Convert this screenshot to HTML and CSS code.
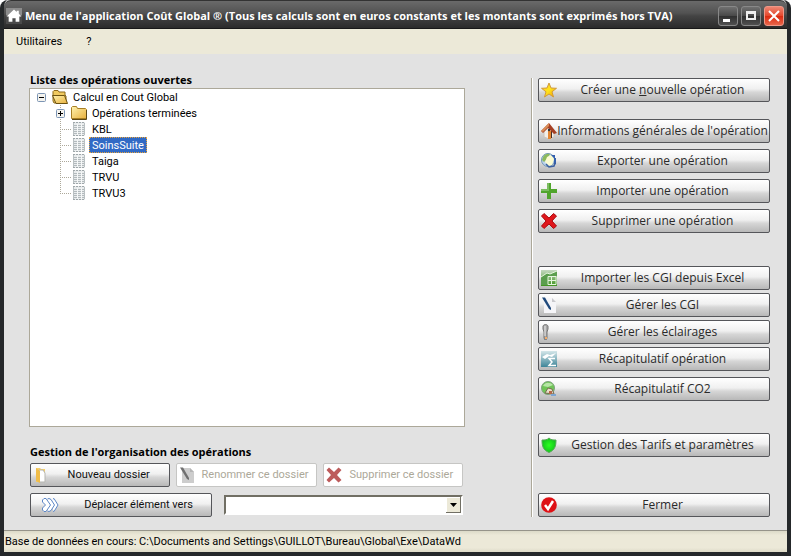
FILE: index.html
```
<!DOCTYPE html>
<html lang="fr">
<head>
    <meta charset="UTF-8">
    <meta name="viewport" content="width=device-width, initial-scale=1.0">
    <title>Menu de l'application Coût Global</title>
    <link rel="stylesheet" href="styles.css">
</head>
<body>
    <!-- Icônes et dégradés partagés -->
    <svg class="defs" width="0" height="0" aria-hidden="true">
        <defs>
            <linearGradient id="gFolder" x1="0" y1="0" x2="1" y2="1">
                <stop offset="0" stop-color="#fff3b0"/>
                <stop offset="1" stop-color="#e8b03c"/>
            </linearGradient>
            <linearGradient id="gStar" x1="0" y1="0" x2="1" y2="1">
                <stop offset="0" stop-color="#ffc81c"/>
                <stop offset=".5" stop-color="#ffe41c"/>
                <stop offset="1" stop-color="#f59a00"/>
            </linearGradient>
            <linearGradient id="gGreen" x1="0" y1="0" x2="0" y2="1">
                <stop offset="0" stop-color="#c4d8c0"/>
                <stop offset="1" stop-color="#3f9420"/>
            </linearGradient>
            <linearGradient id="gTeal" x1="0" y1="0" x2="0" y2="1">
                <stop offset="0" stop-color="#d4e6e9"/>
                <stop offset="1" stop-color="#3e8598"/>
            </linearGradient>
            <radialGradient id="gShield">
                <stop offset="0" stop-color="#2cff20"/>
                <stop offset="1" stop-color="#14c41c"/>
            </radialGradient>
        </defs>
        <symbol id="doc" viewBox="0 0 16 16">
            <path d="M2 1h12v14H2z" fill="#e9eced"/>
            <path d="M2 1.500h12M2 14.500h12" stroke="#9ea6a9" stroke-dasharray="2 1"/>
            <path d="M3 4.500h10M3 6.500h10M3 8.500h10M3 10.500h10M3 12.500h10" stroke="#b3babd"/>
            <path d="M2.500 2v12M13.500 2v12" stroke="#b9c0c2"/>
            <path d="M6.500 3v11M10.500 3v11" stroke="#f6f8f8"/>
        </symbol>
        <symbol id="plus" viewBox="0 0 9 9">
            <rect x=".5" y=".5" width="8" height="8" rx="1" fill="#f4f3ee" stroke="#7c95b4"/>
            <path d="M2 4.500h5M4.500 2v5" stroke="#000"/>
        </symbol>
        <symbol id="minus" viewBox="0 0 9 9">
            <rect x=".5" y=".5" width="8" height="8" rx="1" fill="#f4f3ee" stroke="#7c95b4"/>
            <path d="M2 4.500h5" stroke="#000"/>
        </symbol>
        <symbol id="cross" viewBox="0 0 16 16">
            <path d="M3 .5 8 5l4.500-4.500L15.500 3 11 8l4.500 5-3 2.500L8 11l-5 4.500L.5 13 5 8 .5 3z"/>
        </symbol>
        <symbol id="pen" viewBox="0 0 16 16">
            <path class="sheet" d="M3 1h8l4 4v11H3z"/>
            <path class="fold" d="M11 1v4h4z"/>
            <path class="ink" d="M1 .5h3L10 11v2L8 12z"/>
        </symbol>
    </svg>

    <div class="window">
        <header class="titlebar">
            <svg class="icon" viewBox="0 0 15 15">
                <path d="M0 0h15v15H0z" fill="#4a4a4a"/>
                <path d="M0 0h15v7H0z" fill="#8c8c8c"/>
                <path d="M7.500 1.500 0.500 8h2v5h3.500V9.500h3V13h3.500V8h2L12 5.500V2.500h-2v1.300z" fill="#fff"/>
            </svg>
            <h1>Menu de l'application Coût Global ® (Tous les calculs sont en euros constants et les montants sont exprimés hors TVA)</h1>
            <div class="controls">
                <button type="button" aria-label="Réduire"><svg viewBox="0 0 18 18"><path d="M4 12h7v3H4z" fill="#fff"/></svg></button>
                <button type="button" aria-label="Agrandir"><svg viewBox="0 0 18 18"><path d="M4 4h10v9H4zM6 7v4h6V7z" fill="#eee" fill-rule="evenodd"/></svg></button>
                <button type="button" class="close" aria-label="Fermer la fenêtre"><svg viewBox="0 0 18 18"><path d="m4 4 10 10M14 4 4 14" stroke="#fff" stroke-width="2"/></svg></button>
            </div>
        </header>

        <nav class="menu">
            <a href="#">Utilitaires</a>
            <a href="#">?</a>
        </nav>

        <main>
            <section class="left">
                <h2>Liste des opérations ouvertes</h2>
                <div class="tree">
                    <div class="row"><svg class="toggle"><use href="#minus"/></svg>
                        <svg class="icon" viewBox="0 0 16 16"><path d="M1 4V2.500L2 1.500h4l1 1.500h6v3l1 1v7H2L1 12z" fill="#f0ca60" stroke="#8c6a1c"/><path d="M.5 6.500h12l3 8H4z" fill="url(#gFolder)" stroke="#6b5210"/></svg>
                        <span>Calcul en Cout Global</span></div>
                    <ul>
                        <li class="row branch"><svg class="toggle"><use href="#plus"/></svg>
                            <svg class="icon" viewBox="0 0 16 16"><path d="M.5 13.500v-11l1-1h4l1 2h8l1 1v9z" fill="url(#gFolder)" stroke="#a87f24"/><path d="M1 14.500h14.500V5" fill="none" stroke="#5c4716"/></svg>
                            <span>Opérations terminées</span></li>
                        <li class="row"><svg class="icon"><use href="#doc"/></svg><span>KBL</span></li>
                        <li class="row"><svg class="icon"><use href="#doc"/></svg><span class="selected">SoinsSuite</span></li>
                        <li class="row"><svg class="icon"><use href="#doc"/></svg><span>Taiga</span></li>
                        <li class="row"><svg class="icon"><use href="#doc"/></svg><span>TRVU</span></li>
                        <li class="row"><svg class="icon"><use href="#doc"/></svg><span>TRVU3</span></li>
                    </ul>
                </div>

                <h2>Gestion de l'organisation des opérations</h2>
                <div class="actions">
                    <button type="button" class="btn"><svg class="icon" viewBox="0 0 16 16"><path d="M3 1h4l1 1h4v13H3z" fill="#f5cf6c"/><path d="M6 3h4l2 3v9H6z" fill="#fff" stroke="#b5b5b0"/><path d="m3 1 4 3v12l-4-2z" fill="#f0bd4a"/></svg><span>Nouveau dossier</span></button>
                    <button type="button" class="btn" disabled><svg class="icon pen"><use href="#pen"/></svg><span>Renommer ce dossier</span></button>
                    <button type="button" class="btn" disabled><svg class="icon" fill="#bd5b5b"><use href="#cross"/></svg><span>Supprimer ce dossier</span></button>
                </div>
                <div class="actions move">
                    <button type="button" class="btn"><svg class="icon wide" viewBox="0 0 18 16"><path d="m12 2 1-.5 4 6.500-4 6.500-1-.5M6.500 2 8 1.500l2 1L13.500 8 10 13.500l-2 1L6.500 14" fill="#fff" stroke="#5c86c6"/><path d="M1.500 3 3 1.500h2L9.500 8 5 14.500H3L1.500 13v-2L4.500 8l-3-3z" fill="#fff" stroke="#5c86c6"/></svg><span>Déplacer élément vers</span></button>
                    <div class="combo">
                        <select aria-label="Dossier de destination"><option></option></select>
                        <svg class="arrow" viewBox="0 0 15 16"><path d="M0 0h15v16H0z" fill="#716f64"/><path d="M0 0h14v15H0z" fill="#fff"/><path d="M1 1h13v14H1z" fill="#ece9d8"/><path d="M4 6h7L7.500 10z"/></svg>
                    </div>
                </div>
            </section>

            <aside class="side">
                <div class="group">
                    <button type="button" class="btn"><svg class="icon" viewBox="0 0 16 16"><path d="m8 1 2 5 5.500.3L11 9.800l1.500 5.200L8 12l-4.500 3L5 9.800.5 6.300 6 6z" fill="url(#gStar)" stroke="#d09a3c"/></svg><span>Créer une <u>n</u>ouvelle opération</span></button>
                </div>
                <div class="group operations">
                    <button type="button" class="btn"><svg class="icon" viewBox="0 0 16 16"><path d="M3 8v6l5 2 5-2V8L8 4z" fill="#f2eee9" stroke="#ccc2b8"/><path d="M7 8h3v8H7z" fill="#e48632"/><path d="M10 8h1v7h-1z" fill="#463028"/><path d="M8 0 0 8l2 2 5-5 6 6 3-1z" fill="#a64024"/><path d="M8 0 0 8l2 1 6-6z" fill="#d98b55"/><circle cx="8" cy="7" r="1.200" fill="#333"/></svg><span>Informations générales de l'opération</span></button>
                    <button type="button" class="btn"><svg class="icon" viewBox="0 0 16 16"><circle cx="7" cy="7" r="6.500" fill="#bcd4ee" stroke="#6f96b5"/><path d="M2 4c1-3 5-4 7-3L6 6 3 9 1 7z" fill="#8dba5d"/><path d="m6 4 4-2 3 4-2 6-4 1-3-4z" fill="#fbfbd0"/><path d="M10 2h4v3h1v6l-2 1V5z" fill="#3560ad"/><path d="m5 11 3 3 5-1 1-3" fill="none" stroke="#3b60a0" stroke-width="1.500"/></svg><span>Exporter une opération</span></button>
                    <button type="button" class="btn"><svg class="icon" viewBox="0 0 16 16"><path d="M6 0h4v6h6v4h-6v6H6v-6H0V6h6z" fill="#50a52c"/><path d="M6 0h2v8H0V6h6z" fill="#7cbc61"/></svg><span>Importer une opération</span></button>
                    <button type="button" class="btn"><svg class="icon" fill="#e0161b" stroke="#a90d12"><use href="#cross"/></svg><span>Supprimer une opération</span></button>
                </div>
                <div class="group tight">
                    <button type="button" class="btn"><svg class="icon" viewBox="0 0 16 16"><path d="M0 0h16v16H0z" fill="url(#gGreen)"/><path d="M0 7 6 3l3 1 7-3v5H7v9H0z" fill="#5b9e4e"/><path d="M0 7 6 3l3 1 7-3M7 6.500h8v8H7zM7 10.500h8M10.500 6v9" fill="none" stroke="#e6f5df"/></svg><span>Importer les CGI depuis Excel</span></button>
                    <button type="button" class="btn"><svg class="icon pen"><use href="#pen"/></svg><span>Gérer les CGI</span></button>
                    <button type="button" class="btn"><svg class="icon" viewBox="0 0 16 16"><path d="M2 2c1-2 4-2 5 0v3L6 8v6l-1 2H4l-1-2V8L2 5z" fill="#a7a7a7" stroke="#777"/><path d="M4 2v10" stroke="#eee"/><path d="M4 13h2v2H4z" fill="#f2ac6a"/></svg><span>Gérer les éclairages</span></button>
                    <button type="button" class="btn"><svg class="icon" viewBox="0 0 16 16"><path d="M0 0h16v16H0z" fill="url(#gTeal)"/><path d="m1 6 5-3 3 1 6-2-4 4-3-1-4 3z" fill="#fff"/><path d="M14 7.500H8l3 3.500-3 3.500h7" fill="none" stroke="#fff" stroke-width="1.500"/></svg><span>Récapitulatif opération</span></button>
                </div>
                <div class="group co2">
                    <button type="button" class="btn"><svg class="icon" viewBox="0 0 16 16"><circle cx="7" cy="7" r="6.500" fill="#6fc456" stroke="#80a080"/><path d="M2 5c2-4 7-4 10-1L7 6z" fill="#b7e6a6"/><path d="m4 12 3-5 4 1 2 5z" fill="#e8e0ca" stroke="#766c50"/><path d="M8 10h3v3H8z" fill="#b56848"/><path d="M10 13h5v2h-5z" fill="#7fa6d3"/></svg><span>Récapitulatif CO2</span></button>
                </div>
                <div class="group tarifs">
                    <button type="button" class="btn"><svg class="icon" viewBox="0 0 16 16"><path d="M8 1c2 2 4 2 7 2 0 6-1 10-7 12.500C2 13 1 9 1 3c3 0 5 0 7-2z" fill="url(#gShield)" stroke="#58a858"/></svg><span>Gestion des Tarifs et paramètres</span></button>
                </div>
                <div class="group fermer">
                    <button type="button" class="btn"><svg class="icon" viewBox="0 0 16 16"><circle cx="8" cy="8" r="7.800" fill="#de1015"/><path d="m4 8 3 4 5-8" fill="none" stroke="#fff" stroke-width="2.500"/></svg><span>Fermer</span></button>
                </div>
            </aside>
        </main>

        <footer>Base de données en cours: C:\Documents and Settings\GUILLOT\Bureau\Global\Exe\DataWd</footer>
    </div>
</body>
</html>
```
FILE: styles.css
```
* {
    box-sizing: border-box;
}

body {
    margin: 0;
    background-color: #fff;
    color: #000;
    font-family: Roboto, "Liberation Sans", sans-serif;
    font-size: 11px;
    line-height: 16px;
}

h1, h2 {
    margin: 0;
    font-family: "Open Sans", sans-serif;
    font-size: 11px;
    font-weight: bold;
    line-height: 16px;
    white-space: nowrap;
}

.defs {
    position: absolute;
}

.icon {
    flex: none;
    width: 16px;
    height: 16px;
}

.window {
    display: flex;
    flex-direction: column;
    min-height: 100vh;
    border: 4px solid #25282a;
    border-top: 0;
    border-radius: 8px 8px 0 0;
    background-color: #e2e2e2;
}

.titlebar {
    display: flex;
    align-items: center;
    gap: 3px;
    height: 29px;
    padding: 2px 3px 0 2px;
    border-top: 1px solid #333;
    border-bottom: 1px solid #181818;
    border-radius: 7px 7px 0 0;
    background: linear-gradient(#6a6a6a, #525252 45%, #444 55%, #2b2b2b);
}

.titlebar h1 {
    flex: 1;
    color: #fff;
}

.controls {
    display: flex;
    gap: 3px;
}

.controls button {
    width: 20px;
    height: 20px;
    padding: 0;
    border: 1px solid #888;
    border-radius: 3px;
    background: linear-gradient(#707070, #484848 50%, #303030 52%, #505050);
}

.controls svg {
    display: block;
    width: 18px;
    height: 18px;
}

.controls .close {
    border-color: #f09888;
    background: linear-gradient(#ed8572, #e4452a 50%, #da2a10 52%, #e8664a);
}

.menu {
    display: flex;
    gap: 24px;
    height: 25px;
    padding: 5px 12px 4px;
    background-color: #ece9d8;
}

.menu a {
    color: #000;
    text-decoration: none;
}

main {
    display: flex;
    flex: 1;
    gap: 66px;
    padding: 18px 17px 13px 25px;
}

.left {
    display: flex;
    flex: 1;
    flex-direction: column;
}

.left h2 {
    padding-left: 1px;
}

.tree {
    flex: 1;
    margin-bottom: 17px;
    padding-left: 7px;
    border: 1px solid #aca899;
    background-color: #fff;
}

.tree ul {
    margin: 0 0 0 23px;
    padding: 0;
    list-style: none;
}

.row {
    display: flex;
    align-items: center;
    height: 16px;
}

.row span {
    margin-left: 2px;
    padding: 1px 3px 0;
    line-height: 15px;
}

.row .toggle {
    width: 9px;
    height: 9px;
    margin-right: 6px;
}

/* lignes pointillées de l'arborescence */
.tree li::before {
    content: "";
    align-self: flex-start;
    width: 11px;
    height: 8px;
    border-bottom: 1px dotted #aca899;
}

.tree li {
    background: repeating-linear-gradient(#aca899 0 1px, #fff 1px 2px) 0 0 / 1px 100% no-repeat;
}

.tree li:last-child {
    background-size: 1px 8px;
}

.tree li.branch::before {
    display: none;
}

.tree li.branch .toggle {
    margin-left: -4px;
}

.tree .selected {
    outline: 1px dotted #e8a33c;
    outline-offset: -1px;
    background-color: #316ac5;
    color: #fff;
}

.btn {
    display: flex;
    align-items: center;
    height: 24px;
    padding: 0 1px 0 2px;
    border: 1px solid #55565a;
    border-radius: 2px;
    background: linear-gradient(#fff, #f0f0f0 45%, #d6d6d6 60%, #b8b8b8);
    color: #111;
    font-family: Roboto, "Liberation Sans", sans-serif;
    font-size: 11px;
    line-height: 16px;
    white-space: nowrap;
}

.btn span {
    flex: 1;
    text-align: center;
}

.btn:disabled {
    border-color: #c6c6c4;
    background: #fff;
    color: #aca899;
}

.sheet {
    fill: #f5f5f8;
}

.fold {
    fill: #c8c8cc;
}

.ink {
    fill: #204a7c;
}

.btn:disabled .icon.pen {
    opacity: 0.7;
    filter: grayscale(1) brightness(0.75);
}

.actions {
    display: flex;
    gap: 6px;
    margin-top: 3px;
    padding: 0 2px 0 1px;
}

.actions .btn {
    flex: 1;
}

.actions .icon.wide {
    width: 18px;
    margin: 0 8px;
}

.actions.move {
    align-items: center;
    gap: 12px;
    margin-top: 6px;
}

.actions.move .btn {
    flex: 0 0 182px;
}

.combo {
    position: relative;
    flex: 1;
}

.combo select {
    display: block;
    width: 100%;
    height: 20px;
    border: 2px solid;
    border-color: #716f64 #fff #fff #716f64;
    border-radius: 0;
    background-color: #fff;
    appearance: none;
}

.combo .arrow {
    position: absolute;
    top: 2px;
    right: 2px;
    width: 15px;
    height: 16px;
    pointer-events: none;
}

.side {
    display: flex;
    flex: 0 0 239px;
    flex-direction: column;
    margin-top: 6px;
    padding-left: 6px;
    border-left: 1px solid #aca899;
    box-shadow: inset 1px 0 #fff;
}

.group {
    display: flex;
    flex-direction: column;
    gap: 6px;
}

.group.operations {
    margin-top: 17px;
}

.group.tight {
    gap: 3px;
    margin-top: 33px;
}

.group.co2 {
    margin-top: 6px;
}

.group.tarifs {
    margin-top: 32px;
}

.group.fermer {
    margin-top: auto;
}

.side .btn {
    color: #2a2a2a;
    font-family: "Open Sans", sans-serif;
    font-size: 12px;
}

footer {
    height: 22px;
    padding: 3px 1px;
    border-top: 1px solid #96948a;
    background: linear-gradient(#dcdac8, #ece9d8 20%, #ece9d8 80%, #dedbc8);
}
```
